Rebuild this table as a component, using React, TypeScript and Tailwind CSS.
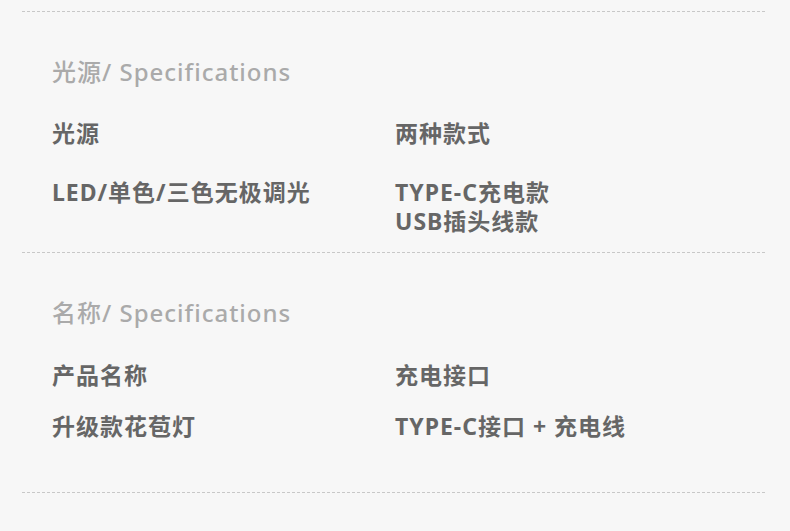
const font = {
  fontFamily: '"Noto Sans", "Noto Sans CJK SC", sans-serif',
};

type Row = { label: string; value: string[] };

const sections: { title: string; rows: [Row, Row]; headGap: string; rowGap: string; bottom: string }[] = [
  {
    title: "光源",
    rows: [
      { label: "光源", value: ["LED/单色/三色无极调光"] },
      { label: "两种款式", value: ["TYPE-C充电款", "USB插头线款"] },
    ],
    headGap: "mt-[30px]",
    rowGap: "mt-[30px]",
    bottom: "pb-[16px]",
  },
  {
    title: "名称",
    rows: [
      { label: "产品名称", value: ["升级款花苞灯"] },
      { label: "充电接口", value: ["TYPE-C接口 + 充电线"] },
    ],
    headGap: "mt-[31px]",
    rowGap: "mt-[22px]",
    bottom: "pb-[51px]",
  },
];

const Column = ({ row, rowGap }: { row: Row; rowGap: string }) => (
  <div className="flex flex-col">
    <div className="text-[23px] leading-[30px] tracking-[1px] font-bold text-[#666]">{row.label}</div>
    <div className={`${rowGap} text-[23px] leading-[29px] tracking-[1px] font-bold text-[#666]`}>
      {row.value.map((v) => (
        <div key={v}>{v}</div>
      ))}
    </div>
  </div>
);

export default function App() {
  return (
    <div className="w-[790px] h-[531px] bg-[#f7f7f7] overflow-hidden pt-[11px]" style={font}>
      <div className="mx-[22px] w-[743px]">
        {sections.map((s) => (
          <div key={s.title} className={`border-t border-dashed border-[#c8c8c8] pt-[44px] ${s.bottom}`}>
            <div className="pl-[30px] text-[24px] leading-[32px] tracking-[1px] font-medium text-[#aaa]">
              {s.title}/ Specifications
            </div>
            <div className={`${s.headGap} grid grid-cols-[343px_1fr] pl-[30px]`}>
              <Column row={s.rows[0]} rowGap={s.rowGap} />
              <Column row={s.rows[1]} rowGap={s.rowGap} />
            </div>
          </div>
        ))}
        <div className="border-t border-dashed border-[#c8c8c8]" />
      </div>
    </div>
  );
}
